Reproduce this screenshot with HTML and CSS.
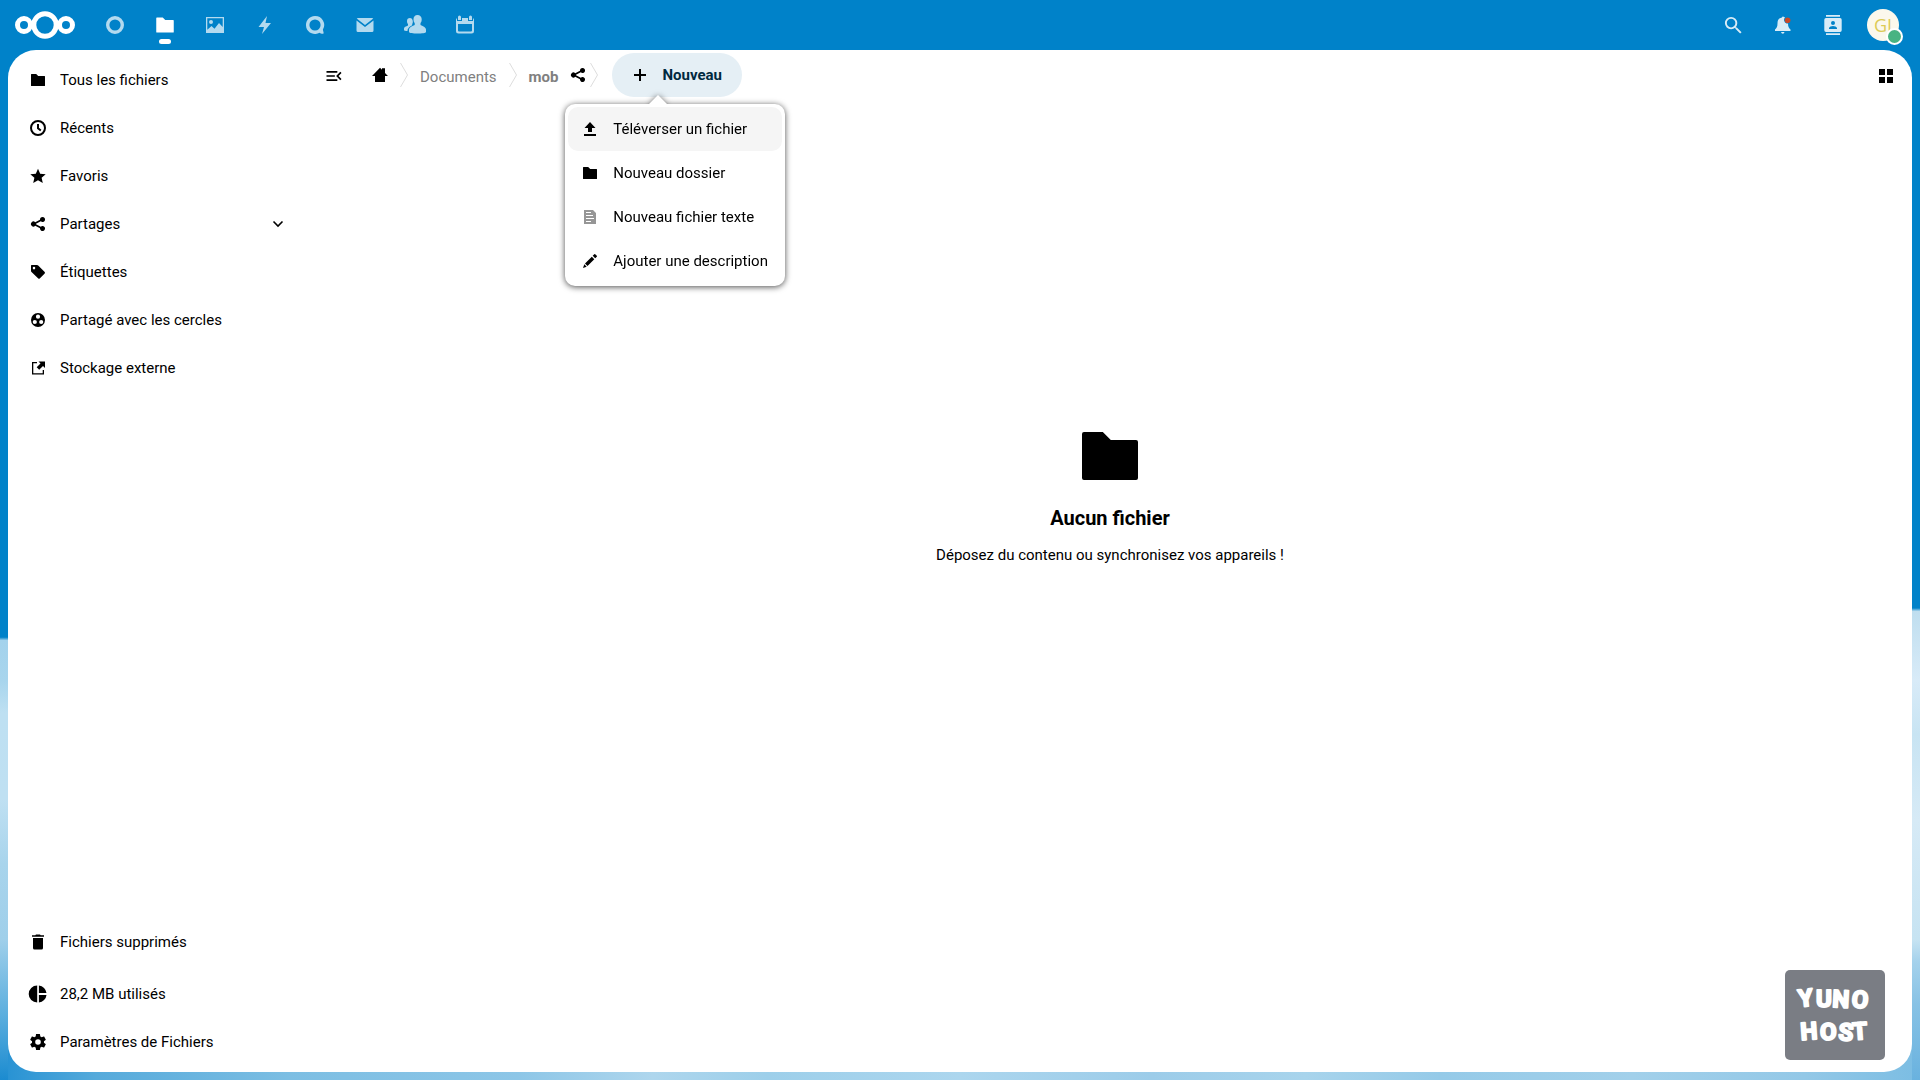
FILE: index.html
```html
<!DOCTYPE html>
<html lang="fr">
<head>
    <meta charset="UTF-8">
    <title>Fichiers - Nextcloud</title>
    <link rel="stylesheet" href="styles.css">
</head>
<body>
    <!-- Icônes partagées -->
    <svg class="sprite" aria-hidden="true">
        <symbol id="i-folder" viewBox="0 0 16 16"><path d="M1.5 2a.5.5 0 0 0-.5.5v11a.5.5 0 0 0 .5.5h13a.5.5 0 0 0 .5-.5v-9a.5.5 0 0 0-.5-.5H8.2l-2-2z"/></symbol>
        <symbol id="i-share" viewBox="0 0 16 16"><path d="M12.5 1A2.5 2.5 0 0 0 10 3.5v.3L5.2 6.2a2.5 2.5 0 1 0 0 3.6l4.8 2.4v.3a2.5 2.5 0 1 0 .8-1.8L6 8.3v-.6l4.8-2.4A2.5 2.5 0 1 0 12.5 1z"/></symbol>
    </svg>

    <header class="header">
        <a class="logo" href="#" aria-label="Nextcloud">
            <svg width="62" height="30" viewBox="0 0 62 30" fill="none" stroke="#fff">
                <circle cx="31" cy="15" r="11.2" stroke-width="5"/>
                <circle cx="10" cy="15" r="6.5" stroke-width="5"/>
                <circle cx="52" cy="15" r="6.5" stroke-width="5"/>
            </svg>
        </a>
        <nav class="apps" aria-label="Applications">
            <a href="#" aria-label="Tableau de bord"><svg viewBox="0 0 20 20"><circle cx="10" cy="10" r="7.3" fill="none" stroke="#fff" stroke-width="3.4"/></svg></a>
            <a href="#" class="active" aria-label="Fichiers"><svg><use href="#i-folder"/></svg></a>
            <a href="#" aria-label="Photos"><svg viewBox="0 0 20 20"><path fill-rule="evenodd" d="M1 2h18v16H1zm1.3 1.3v11.4L6.5 11l3 2.700L14 8l3.700 4V3.300zM6 5a2 2 0 1 1 0 4 2 2 0 0 1 0-4z"/></svg></a>
            <a href="#" aria-label="Activité"><svg viewBox="0 0 20 20"><path d="M12 1L3.500 12H9l-2 7 9-11h-5.500z"/></svg></a>
            <a href="#" aria-label="Discussion"><svg viewBox="0 0 20 20"><path fill-rule="evenodd" d="M10 1a9 9 0 1 0 4.600 16.700c1.100.8 2.800 1.500 3.900.9.600-.4-.5-2.600-.6-4A9 9 0 0 0 10 1zm0 3.400a5.600 5.600 0 1 1 0 11.200 5.600 5.600 0 0 1 0-11.200z"/></svg></a>
            <a href="#" aria-label="E-mail"><svg viewBox="0 0 20 20"><path d="M3 3h14l1.300.5L10 10 1.700 3.500zM1.500 5.500L10 12l8.500-6.500V15.500q0 1.500-1.500 1.500H3q-1.500 0-1.500-1.500z"/></svg></a>
            <a href="#" aria-label="Contacts"><svg viewBox="0 0 20 20"><path d="M12.500 0C10 0 8.500 1.700 8.500 4c0 2 .3 3 1.200 4v2C6.500 11.500 4 12.500 4 14.500V17c0 2 17 2 17 0v-2.500c0-2-2.500-3-5.500-4.500V8c.9-1 1.200-2 1.200-4 0-2.300-1.700-4-4.200-4zM5 3C3 3 2 4.300 2 6c0 1.500.3 2.300 1 3v1.500c-2 1-4 1.500-4 3V15c0 .7 1.500 1 3.500 1 0-3 2.500-4.500 4.700-5.700V9C8 8 8 6.500 7.500 5 7.200 3.700 6.300 3 5 3z"/></svg></a>
            <a href="#" aria-label="Agenda"><svg viewBox="0 0 20 20"><path fill-rule="evenodd" d="M4.500 0.500q1.500 0 1.500 1.500v3H3V2q0-1.500 1.500-1.500zM15.500.500q1.500 0 1.500 1.500v3h-3V2q0-1.500 1.500-1.500zM1 5q0-1.500 1-1.700V6h5V3h6v3h5V3.300q1 .2 1 1.700v11q0 2.500-2.500 2.500h-13Q1 18.500 1 16zm2 4v6.500q0 1 1 1h12q1 0 1-1V9z"/></svg></a>
        </nav>
        <div class="header-end">
            <button type="button" aria-label="Rechercher"><svg viewBox="1 1 21 21"><path d="M9.500 3A6.500 6.500 0 0 1 16 9.500c0 1.610-.59 3.090-1.560 4.230l.27.27h.79l5 5-1.500 1.500-5-5v-.79l-.27-.27A6.516 6.516 0 0 1 9.500 16a6.500 6.500 0 0 1 0-13m0 2C7 5 5 7 5 9.500S7 14 9.500 14 14 12 14 9.500 12 5 9.500 5z"/></svg></button>
            <button type="button" aria-label="Notifications"><svg viewBox="0 0 20 20"><path d="M10 1.500q-.8 0-1 1C5.500 3 4.500 5.500 4.500 8.500 4.500 12 3.500 13 2 14.500V16h15.500v-1.500C16 13 15 12 15 8.500h-1.500A4 4 0 0 1 12 2.200L11 2q-.3-.5-1-.5zM8 17q.4 1.700 1.800 1.700T11.500 17z"/><circle cx="14.600" cy="5.200" r="2.800" fill="#e9400f"/></svg></button>
            <button type="button" aria-label="Recherche de contacts"><svg viewBox="0 0 20 20"><path fill-rule="evenodd" d="M3 0h14v1.700H3zM3 18.300h14V20H3zM3 3h14q1.700 0 1.700 1.700v10.600Q18.700 17 17 17H3q-1.700 0-1.700-1.700V4.700Q1.300 3 3 3zm7 3a2 2 0 1 0 0 4 2 2 0 0 0 0-4zm-4 8h8v-.8c0-1.400-2.600-2.200-4-2.200s-4 .8-4 2.200z"/></svg></button>
            <button type="button" class="user" aria-label="Paramètres du compte"><span class="avatar">GI<span class="status"></span></span></button>
        </div>
    </header>

    <div class="content">
        <aside class="sidebar">
            <ul>
                <li><a href="#"><svg><use href="#i-folder"/></svg>Tous les fichiers</a></li>
                <li><a href="#"><svg viewBox="0 0 16 16"><path fill="none" stroke="#000" stroke-width="2" d="M8 1a7 7 0 1 1 0 14A7 7 0 0 1 8 1zm0 3v4.300l2.800 2.200"/></svg>Récents</a></li>
                <li><a href="#"><svg viewBox="0 0 16 16"><path d="M8 .8l2.200 4.900 5.500.6-4.100 3.500 1.200 5.200L8 12.300 3.200 15l1.200-5.200L.3 6.300l5.500-.6z"/></svg>Favoris</a></li>
                <li>
                    <a href="#"><svg><use href="#i-share"/></svg>Partages</a>
                    <button type="button" class="expand" aria-label="Ouvrir le menu"><svg viewBox="0 0 16 16"><path fill="none" stroke="#000" stroke-width="1.600" d="M3.500 5.500L8 10l4.500-4.500"/></svg></button>
                </li>
                <li><a href="#"><svg viewBox="0 0 16 16"><path fill-rule="evenodd" d="M1.500 1H7q.7 0 1.200.5l6.500 6.500q.6.700 0 1.400l-5 5q-.7.600-1.400 0L1.500 8Q1 7.500 1 6.800V1.500zM4 2.800A1.300 1.300 0 1 0 4 5.400a1.300 1.300 0 0 0 0-2.600z"/></svg>Étiquettes</a></li>
                <li><a href="#"><svg viewBox="0 0 16 16"><path fill-rule="evenodd" d="M8 1a7 7 0 1 0 0 14A7 7 0 0 0 8 1zm0 1.600a2.100 2.100 0 1 1 0 4.200 2.100 2.100 0 0 1 0-4.200zM4.800 7.900a2.100 2.100 0 1 1 0 4.200 2.100 2.100 0 0 1 0-4.200zm6.400 0a2.100 2.100 0 1 1 0 4.200 2.100 2.100 0 0 1 0-4.200z"/></svg>Partagé avec les cercles</a></li>
                <li><a href="#"><svg viewBox="0 0 16 16"><path d="M7 2v1.300H3.300v9.900h9.400V10H14v4.500H2V2zM8.500 1.500H15V8l-2-2-3.800 3.800-2.500-2.500 3.800-3.800z"/></svg>Stockage externe</a></li>
            </ul>
            <ul class="bottom">
                <li class="trash"><a href="#"><svg viewBox="0 0 16 16"><path d="M6 .5h4l.7.8H14v1.500H2V1.300h3.300zM3 4h10v10q0 1.500-1.500 1.500h-7Q3 15.500 3 14z"/></svg>Fichiers supprimés</a></li>
                <li><a href="#"><svg viewBox="2 2 16 16"><path d="M9.200 1.500v17a8.500 8.500 0 0 1 0-17zM10.900 1.500a8.500 8.500 0 0 1 7.600 7.600h-7.600zM10.900 10.900h7.600a8.500 8.500 0 0 1-7.600 7.600z"/></svg>28,2 MB utilisés</a></li>
                <li><a href="#"><svg viewBox="2 2 20 20"><path d="M12 15.500A3.500 3.500 0 0 1 8.500 12 3.500 3.500 0 0 1 12 8.500a3.500 3.500 0 0 1 3.500 3.500 3.500 3.500 0 0 1-3.500 3.500m7.430-2.530c.04-.32.07-.64.07-.97s-.03-.66-.07-1l2.110-1.630c.19-.15.24-.42.12-.64l-2-3.460c-.12-.22-.39-.31-.61-.22l-2.490 1c-.52-.39-1.060-.73-1.690-.98l-.37-2.650A.506.506 0 0 0 14 2h-4c-.25 0-.46.18-.5.42l-.37 2.650c-.63.25-1.170.59-1.690.98l-2.490-1c-.22-.09-.49 0-.61.22l-2 3.460c-.13.22-.07.49.12.64L4.570 11c-.04.34-.07.67-.07 1s.03.65.07.97l-2.110 1.660c-.19.15-.25.42-.12.64l2 3.460c.12.220.39.300.61.220l2.490-1.010c.52.400 1.060.740 1.690.990l.37 2.650c.04.240.25.420.5.420h4c.25 0 .46-.18.5-.42l.37-2.650c.63-.26 1.170-.59 1.690-.99l2.490 1.010c.22.080.49 0 .61-.22l2-3.460c.12-.22.07-.49-.12-.64z"/></svg>Paramètres de Fichiers</a></li>
            </ul>
        </aside>

        <main class="main">
            <div class="toolbar">
                <button type="button" class="toggle" aria-label="Fermer la navigation"><svg viewBox="0 0 24 24"><path d="M21 15.610L19.590 17l-5.010-5 5.010-5L21 8.390 17.440 12zM3 6h13v2H3zm0 7v-2h10v2zm0 5v-2h13v2z"/></svg></button>
                <nav class="crumbs" aria-label="Fil d'Ariane">
                    <a href="#" class="home" aria-label="Accueil"><svg viewBox="0 0 16 16"><path d="M8 .8L0 9h3v6h10V9h3l-3-3V1.200h-3v1.600z"/></svg></a>
                    <svg class="sep" viewBox="0 0 8 24"><path d="M.5 0l7 12-7 12"/></svg>
                    <a href="#" class="crumb">Documents</a>
                    <svg class="sep" viewBox="0 0 8 24"><path d="M.5 0l7 12-7 12"/></svg>
                    <a href="#" class="crumb current">mob</a>
                    <button type="button" class="share" aria-label="Partager"><svg><use href="#i-share"/></svg></button>
                    <svg class="sep" viewBox="0 0 8 24"><path d="M.5 0l7 12-7 12"/></svg>
                </nav>
                <div class="new">
                    <button type="button" class="new-button"><svg viewBox="0 0 12 12"><path d="M5 0h2v5h5v2H7v5H5V7H0V5h5z"/></svg>Nouveau</button>
                    <div class="menu">
                        <button type="button" class="hover"><svg viewBox="0 0 16 16"><path d="M8 1l5.500 6H10v4H6V7H2.500zM2 13h12v2H2z"/></svg>Téléverser un fichier</button>
                        <button type="button"><svg><use href="#i-folder"/></svg>Nouveau dossier</button>
                        <button type="button"><svg viewBox="0 0 16 16"><path fill="#969696" fill-rule="evenodd" d="M2 1h9l3 3v11H2zm2 2v1h5V3zm0 3v1h7V6zm0 3v1h8V9zm0 3v1h5v-1z"/></svg>Nouveau fichier texte</button>
                        <button type="button"><svg viewBox="0 0 16 16"><path d="M12.300 1.200q.4-.4.900 0l1.600 1.600q.4.500 0 .9l-1.600 1.600-2.500-2.500zM9.800 3.700l2.500 2.500-6.800 6.800L3 10.500zM2.300 11.300l2.400 2.400L1 15z"/></svg>Ajouter une description</button>
                    </div>
                </div>
                <button type="button" class="view" aria-label="Afficher la vue mosaïque"><svg viewBox="0 0 16 16"><path d="M1 1h6v6H1zM9 1h6v6H9zM1 9h6v6H1zM9 9h6v6H9z"/></svg></button>
            </div>

            <div class="empty">
                <svg><use href="#i-folder"/></svg>
                <h2>Aucun fichier</h2>
                <p>Déposez du contenu ou synchronisez vos appareils !</p>
            </div>

            <a class="yunohost" href="#" aria-label="YunoHost">
                <svg width="100" height="90" viewBox="0 0 100 90">
                    <text x="14 31 47 66" y="37" rotate="-6 0 3 6">YUNO</text>
                    <text x="16 35 53 68" y="70" rotate="-4 0 4 -4">HOST</text>
                </svg>
            </a>
        </main>
    </div>
</body>
</html>
```
FILE: styles.css
```css
* {
    box-sizing: border-box;
}

body {
    margin: 0;
    height: 100vh;
    display: flex;
    flex-direction: column;
    font-family: Roboto, sans-serif;
    font-size: 15px;
    line-height: 24px;
    color: #000;
    background-color: #0082c9;
    /* nuages : bord gauche, bord droit, bas */
    background-image:
        linear-gradient(to bottom, #0082c9 59%, #a3d2ec 59.3%, #a8d5ed 63%, #bee0f2 66%, #bfe0f2 74%, #a8d4ec 80%, #9fcfea 87%, #5baede 94%, #1b8bd0 100%),
        linear-gradient(to bottom, #0082c9 56.3%, #bfdeef 56.6%, #d8ebf8 63%, #c8e4f3 68%, #d6eaf6 76%, #c6e3f2 87%, #a5d2ec 89%, #87c2e5 93%, #69b2df 100%),
        linear-gradient(to right, #2591d3 0, #55aadb 5%, #7cbee3 15%, #8dc6e7 27%, #aed6ed 34%, #9dcfea 40%, #acd6ee 50%, #9ccce9 60%, #a8d4ec 68%, #95cae8 75%, #a2d0ea 85%, #93c8e7 94%, #7bbde3 100%);
    background-size: 8px 100%, 8px 100%, 100% 36px;
    background-position: left top, right top, left bottom;
    background-repeat: no-repeat;
}

a {
    color: inherit;
    text-decoration: none;
}

button {
    border: none;
    background: none;
    padding: 0;
    font: inherit;
    color: inherit;
    cursor: pointer;
}

svg {
    display: block;
    flex-shrink: 0;
}

.sprite {
    position: absolute;
    width: 0;
    height: 0;
}

/* En-tête */
.header {
    height: 50px;
    flex-shrink: 0;
    display: flex;
    align-items: center;
    padding: 0 12px 0 14px;
}

.logo {
    width: 76px;
}

.apps,
.header-end {
    display: flex;
}

.header-end {
    margin-left: auto;
}

.apps a,
.header-end button {
    width: 50px;
    height: 50px;
    display: flex;
    align-items: center;
    justify-content: center;
    position: relative;
}

.apps svg,
.header-end svg {
    width: 20px;
    height: 20px;
    fill: #fff;
    overflow: visible;
    opacity: 0.7;
}

.header-end svg {
    opacity: 0.85;
}

.apps .active svg {
    opacity: 1;
}

.apps .active::after {
    content: "";
    position: absolute;
    left: 19px;
    bottom: 6px;
    width: 12px;
    height: 5px;
    border-radius: 3px;
    background: #fff;
}

.avatar {
    width: 32px;
    height: 32px;
    border-radius: 50%;
    background: #fbf8ec;
    color: #ddcb55;
    font: 18px/32px "Open Sans", sans-serif;
    position: relative;
}

.status {
    position: absolute;
    right: -4px;
    bottom: -4px;
    width: 17px;
    height: 17px;
    border: 2px solid #fff;
    border-radius: 50%;
    background: #49b382;
}

.content {
    flex: 1;
    display: flex;
    margin: 0 8px 8px;
    background: #fff;
    border-radius: 28px;
}

/* Navigation */
.sidebar {
    width: 300px;
    padding: 8px;
    display: flex;
    flex-direction: column;
}

.sidebar ul {
    list-style: none;
    margin: 0;
    padding: 0;
    display: flex;
    flex-direction: column;
    gap: 4px;
}

.sidebar .bottom {
    margin-top: auto;
}

.sidebar .trash {
    margin-bottom: 4px;
}

.sidebar li {
    display: flex;
}

.sidebar a {
    flex: 1;
    height: 44px;
    display: flex;
    align-items: center;
    gap: 14px;
    padding-left: 14px;
}

.sidebar svg {
    width: 16px;
    height: 16px;
}

.sidebar .bottom svg {
    overflow: visible;
}

.expand {
    width: 44px;
    height: 44px;
    display: flex;
    align-items: center;
    justify-content: center;
}

/* Contenu */
.main {
    flex: 1;
    display: flex;
    flex-direction: column;
    position: relative;
}

.toolbar {
    display: flex;
    align-items: center;
    padding: 3px 4px 0;
}

.toggle,
.view {
    width: 44px;
    height: 44px;
    padding-top: 2px;
    display: flex;
    align-items: center;
    justify-content: center;
}

.toggle svg {
    width: 20px;
    height: 20px;
}

.crumbs {
    display: flex;
    align-items: center;
    gap: 12px;
    padding-left: 16px;
}

.home svg,
.share svg,
.view svg {
    width: 16px;
    height: 16px;
}

.crumb {
    padding-top: 3px;
    color: #808080;
}

.current {
    font-weight: bold;
}

.share {
    margin-right: -8px;
}

.sep {
    width: 8px;
    height: 24px;
    fill: none;
    stroke: #ddd;
}

.new {
    position: relative;
    margin-left: 14px;
}

.new-button {
    height: 44px;
    display: flex;
    align-items: center;
    gap: 16px;
    padding: 0 20px 0 22px;
    border-radius: 22px;
    background: #e5eff5;
    color: #00293f;
    font-weight: bold;
}

.new-button svg {
    width: 12px;
    height: 12px;
    fill: #000;
}

.menu {
    position: absolute;
    top: 51px;
    right: -43px;
    padding: 3px;
    border-radius: 10px;
    background: #fff;
    filter: drop-shadow(0 1px 3px #4d4d4d);
}

.menu::before {
    content: "";
    position: absolute;
    left: 84px;
    top: -9px;
    border: 9px solid transparent;
    border-top: none;
    border-bottom-color: #fff;
}

.menu button {
    width: 100%;
    height: 44px;
    display: flex;
    align-items: center;
    gap: 15px;
    padding: 0 14px;
    border-radius: 10px;
    white-space: nowrap;
}

.menu .hover {
    background: #f5f5f5;
}

.menu svg {
    width: 16px;
    height: 16px;
}

.view {
    margin-left: auto;
}

.empty {
    flex: 1;
    display: flex;
    flex-direction: column;
    align-items: center;
    padding-top: 327px;
}

.empty svg {
    width: 64px;
    height: 64px;
}

.empty h2 {
    margin: 15px 0 10px;
    font-size: 20px;
    line-height: 30px;
}

.empty p {
    margin: 0;
}

.yunohost {
    position: absolute;
    right: 27px;
    bottom: 12px;
    border-radius: 5px;
    background: #7a7d84;
}

.yunohost text {
    font: bold 24px Roboto, sans-serif;
    fill: #fff;
    stroke: #fff;
    stroke-width: 2px;
    stroke-linejoin: round;
}
```
